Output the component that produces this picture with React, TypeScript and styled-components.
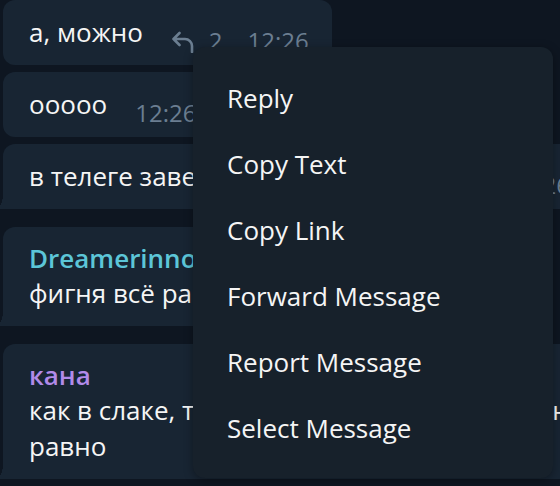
import React from 'react';
import styled, { createGlobalStyle } from 'styled-components';

const GlobalStyle = createGlobalStyle`
  html, body {
    margin: 0;
    padding: 0;
    background: #0e1621;
    overflow: hidden;
  }
  body {
    font-family: 'Open Sans', 'Noto Sans', sans-serif;
    color: #f5f5f5;
  }
`;

type Message = {
  name?: string;
  nameColor?: string;
  lines: string[];
  time: string;
  replies?: number;
  tail?: boolean;
  width?: number;
};

const groups: Message[][] = [
  [
    { lines: ['а, можно'], time: '12:26', replies: 2 },
    { lines: ['ооооо'], time: '12:26' },
    { lines: ['в телеге завели треды, это удобно'], time: '12:26', tail: true, width: 590 },
  ],
  [
    { name: 'Dreamerinno', nameColor: '#5cc6d8', lines: ['фигня всё равно'], time: '12:27', tail: true },
  ],
  [
    {
      name: 'кана',
      nameColor: '#b18ae8',
      lines: ['как в слаке, только там треды удобнее, а нам всё', 'равно'],
      time: '12:27',
      tail: true,
      width: 640,
    },
  ],
];

const menuItems = ['Reply', 'Copy Text', 'Copy Link', 'Forward Message', 'Report Message', 'Select Message'];

const ReplyIcon = () => (
  <svg width="24" height="22" viewBox="0 0 24 22" fill="none">
    <path
      d="M8.5 2 L2.5 8 L8.5 14 M2.5 8 H14 a7 7 0 0 1 7 7 V21"
      stroke="#6b7e91"
      strokeWidth="2.6"
      strokeLinecap="round"
      strokeLinejoin="round"
    />
  </svg>
);

const App: React.FC = () => {
  return (
    <>
      <GlobalStyle />
      <Screen>
        <Feed>
          {groups.map((group, gi) => (
            <Group key={gi}>
              {group.map((m, i) => (
                <Bubble key={i} $tail={!!m.tail} $width={m.width}>
                  <Body>
                    {m.name && <Name $color={m.nameColor || '#fff'}>{m.name}</Name>}
                    {m.lines.map((l, li) => (
                      <Line key={li}>{l}</Line>
                    ))}
                  </Body>
                  <Meta>
                    {m.replies !== undefined && (
                      <Replies>
                        <ReplyIcon />
                        <span>{m.replies}</span>
                      </Replies>
                    )}
                    <Time>{m.time}</Time>
                  </Meta>
                </Bubble>
              ))}
            </Group>
          ))}
        </Feed>

        <Menu>
          {menuItems.map((item) => (
            <MenuItem key={item}>{item}</MenuItem>
          ))}
        </Menu>
      </Screen>
    </>
  );
};

export default App;

// Styled Components

const Screen = styled.div`
  position: relative;
  width: 560px;
  height: 486px;
  overflow: hidden;
`;

const Feed = styled.div`
  display: flex;
  flex-direction: column;
  gap: 18px;
  padding-left: 3px;
`;

const Group = styled.div`
  display: flex;
  flex-direction: column;
  align-items: flex-start;
  gap: 7px;
`;

const Bubble = styled.div<{ $tail: boolean; $width?: number }>`
  position: relative;
  display: flex;
  align-items: flex-end;
  box-sizing: border-box;
  width: ${(p) => (p.$width ? `${p.$width}px` : 'auto')};
  flex-shrink: 0;
  padding: 14px 23px 0 26px;
  background: #182533;
  border-radius: 12px;
  border-bottom-left-radius: ${(p) => (p.$tail ? '0' : '12px')};

  &::before {
    content: '';
    display: ${(p) => (p.$tail ? 'block' : 'none')};
    position: absolute;
    left: -8px;
    bottom: 0;
    width: 8px;
    height: 14px;
    background: radial-gradient(ellipse 8px 14px at 0 0, transparent 97%, #182533 100%);
  }
`;

const Body = styled.div`
  display: flex;
  flex-direction: column;
  padding-bottom: 15px;
  font-size: 26px;
  white-space: nowrap;
`;

const Name = styled.div<{ $color: string }>`
  font-weight: 600;
  line-height: 34px;
  color: ${(p) => p.$color};
`;

const Line = styled.div`
  line-height: 36px;
`;

const Meta = styled.div`
  display: flex;
  align-items: center;
  margin-left: auto;
  padding-left: 28px;
  padding-bottom: 12px;
  font-size: 24px;
  line-height: 24px;
  color: #6b7e91;
`;

const Replies = styled.div`
  display: flex;
  align-items: center;
  gap: 14px;
  margin-right: 25px;

  svg {
    margin-top: 2px;
  }
`;

const Time = styled.span``;

const Menu = styled.div`
  position: absolute;
  left: 193px;
  top: 47px;
  width: 360px;
  padding: 18px 0 17px;
  background: #17212b;
  border-radius: 12px;
  box-shadow: 0 2px 10px rgba(0, 0, 0, 0.35);
`;

const MenuItem = styled.div`
  height: 66px;
  line-height: 66px;
  padding-left: 34px;
  font-size: 26px;
  color: #f5f5f5;
  cursor: pointer;
`;
